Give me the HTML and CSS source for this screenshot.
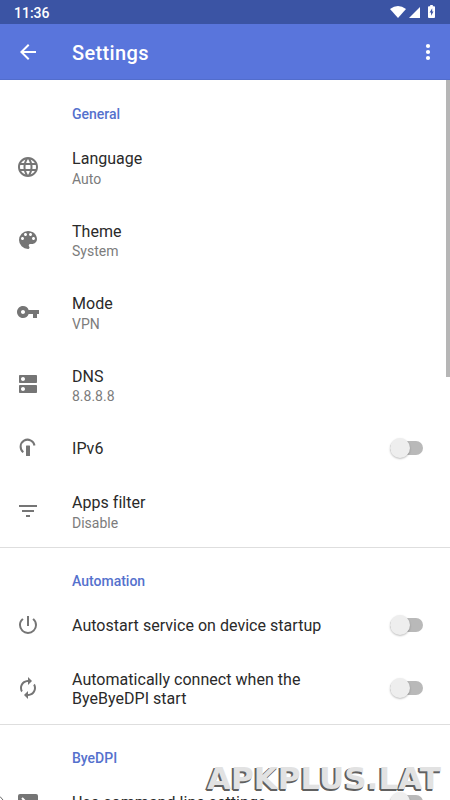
FILE: index.html
```html
<!DOCTYPE html>
<html lang="en">
<head>
<meta charset="utf-8">
<title>Settings</title>
<link rel="stylesheet" href="styles.css">
</head>
<body>
<div class="screen">
  <div class="status">
    <span>11:36</span>
    <div class="status-icons">
      <svg width="16" height="12" viewBox="0 0 16 12"><path d="M0 3Q8-3 16 3L8 12Z"/></svg>
      <svg width="11" height="11" viewBox="0 0 12 12"><path d="M12 0V12H0Z"/></svg>
      <svg class="battery" width="7" height="13" viewBox="0 0 8 14" preserveAspectRatio="none"><path d="M2.500 0h3v1.300H7a1 1 0 0 1 1 1V13a1 1 0 0 1-1 1H1a1 1 0 0 1-1-1V2.300a1 1 0 0 1 1-1h1.500z"/><path class="bolt" d="M4.800 3.500 1.800 8H3.500v3.500L6.300 7H4.800z"/></svg>
    </div>
  </div>
  <header class="bar">
    <svg class="back" width="24" height="24" viewBox="0 0 24 24"><path d="M20 11H7.830l5.590-5.590L12 4l-8 8 8 8 1.410-1.410L7.830 13H20v-2z"/></svg>
    <h1>Settings</h1>
    <svg width="24" height="24" viewBox="0 0 24 24"><circle cx="12" cy="6" r="2.100"/><circle cx="12" cy="12" r="2.100"/><circle cx="12" cy="18" r="2.100"/></svg>
  </header>
  <main>
    <section>
      <h2>General</h2>
      <div class="row tall">
        <svg viewBox="0 0 24 24"><path d="M11.990 2C6.470 2 2 6.480 2 12s4.470 10 9.990 10C17.520 22 22 17.520 22 12S17.520 2 11.990 2zm6.930 6h-2.950a15.650 15.650 0 0 0-1.380-3.560A8.030 8.030 0 0 1 18.920 8zM12 4.040c.830 1.200 1.480 2.530 1.910 3.960h-3.820c.430-1.430 1.080-2.760 1.910-3.960zM4.260 14C4.100 13.360 4 12.690 4 12s.100-1.360.260-2h3.380c-.080.660-.140 1.320-.140 2s.060 1.340.140 2H4.260zm.820 2h2.950c.320 1.250.780 2.450 1.380 3.560A7.990 7.990 0 0 1 5.080 16zm2.950-8H5.080a7.990 7.990 0 0 1 4.330-3.560A15.650 15.650 0 0 0 8.030 8zM12 19.960c-.830-1.200-1.480-2.530-1.910-3.960h3.820c-.430 1.430-1.080 2.760-1.910 3.960zM14.340 14H9.660c-.090-.660-.160-1.320-.160-2s.070-1.350.160-2h4.680c.090.650.160 1.320.160 2s-.070 1.340-.160 2zm.250 5.560c.600-1.110 1.060-2.310 1.380-3.560h2.950a8.030 8.030 0 0 1-4.330 3.560zM16.360 14c.080-.660.140-1.320.140-2s-.060-1.340-.140-2h3.380c.160.640.260 1.310.260 2s-.100 1.360-.260 2h-3.380z"/></svg>
        <div class="text"><p>Language</p><small>Auto</small></div>
      </div>
      <div class="row tall">
        <svg viewBox="0 0 24 24"><path d="M12 3a9 9 0 0 0 0 18c.830 0 1.500-.670 1.500-1.500 0-.390-.150-.740-.390-1.010-.230-.260-.380-.610-.380-.990 0-.830.670-1.500 1.500-1.500H16c2.760 0 5-2.240 5-5 0-4.420-4.030-8-9-8zm-5.500 9C5.670 12 5 11.330 5 10.500S5.670 9 6.500 9 8 9.670 8 10.500 7.330 12 6.500 12zm3-4C8.670 8 8 7.330 8 6.500S8.670 5 9.500 5s1.500.670 1.500 1.500S10.330 8 9.500 8zm5 0c-.830 0-1.500-.670-1.500-1.500S13.670 5 14.500 5s1.500.670 1.500 1.500S15.330 8 14.500 8zm3 4c-.830 0-1.500-.670-1.500-1.500S16.670 9 17.500 9s1.500.670 1.500 1.500-.670 1.500-1.500 1.500z"/></svg>
        <div class="text"><p>Theme</p><small>System</small></div>
      </div>
      <div class="row tall">
        <svg viewBox="0 0 24 24"><path d="M12.650 10A5.990 5.990 0 0 0 7 6c-3.310 0-6 2.690-6 6s2.690 6 6 6a5.990 5.990 0 0 0 5.650-4H17v4h4v-4h2v-4H12.650zM7 14c-1.100 0-2-.900-2-2s.900-2 2-2 2 .900 2 2-.900 2-2 2z"/></svg>
        <div class="text"><p>Mode</p><small>VPN</small></div>
      </div>
      <div class="row tall">
        <svg viewBox="0 0 24 24"><path d="M20 13H4c-.550 0-1 .450-1 1v6c0 .550.450 1 1 1h16c.550 0 1-.450 1-1v-6c0-.550-.450-1-1-1zM7 19c-1.100 0-2-.900-2-2s.900-2 2-2 2 .900 2 2-.900 2-2 2zM20 3H4c-.550 0-1 .450-1 1v6c0 .550.450 1 1 1h16c.550 0 1-.450 1-1V4c0-.550-.450-1-1-1zM7 9c-1.100 0-2-.900-2-2s.900-2 2-2 2 .900 2 2-.900 2-2 2z"/></svg>
        <div class="text"><p>DNS</p><small>8.8.8.8</small></div>
      </div>
      <div class="row">
        <svg viewBox="0 0 24 24"><path class="line" d="M7.300 16.200A7 7 0 1 1 18.500 9.500"/><rect x="10" y="9.500" width="4" height="10.500" rx=".5"/></svg>
        <div class="text"><p>IPv6</p></div>
        <span class="switch"></span>
      </div>
      <div class="row tall">
        <svg viewBox="0 0 24 24"><path d="M10 18h4v-2h-4v2zM3 6v2h18V6H3zm3 7h12v-2H6v2z"/></svg>
        <div class="text"><p>Apps filter</p><small>Disable</small></div>
      </div>
    </section>
    <section>
      <h2>Automation</h2>
      <div class="row">
        <svg viewBox="0 0 24 24"><path d="M13 3h-2v10h2V3zm4.830 2.170-1.420 1.420A6.920 6.920 0 0 1 19 12c0 3.870-3.130 7-7 7A6.995 6.995 0 0 1 7.580 6.580L6.170 5.170A8.932 8.932 0 0 0 3 12a9 9 0 0 0 18 0c0-2.740-1.230-5.180-3.170-6.830z"/></svg>
        <div class="text"><p>Autostart service on device startup</p></div>
        <span class="switch"></span>
      </div>
      <div class="row tall">
        <svg viewBox="0 0 24 24"><path d="M12 6v3l4-4-4-4v3c-4.420 0-8 3.580-8 8 0 1.570.460 3.030 1.240 4.260L6.700 14.800A5.870 5.870 0 0 1 6 12c0-3.310 2.690-6 6-6zm6.760 1.740L17.300 9.200c.440.840.700 1.790.700 2.800 0 3.310-2.690 6-6 6v-3l-4 4 4 4v-3c4.420 0 8-3.580 8-8 0-1.570-.460-3.030-1.240-4.260z"/></svg>
        <div class="text wrap"><p>Automatically connect when the ByeByeDPI start</p></div>
        <span class="switch"></span>
      </div>
    </section>
    <section>
      <h2>ByeDPI</h2>
      <div class="row">
        <svg viewBox="0 0 24 24"><path d="M4 4h16a2 2 0 0 1 2 2v12a2 2 0 0 1-2 2H4a2 2 0 0 1-2-2V6a2 2 0 0 1 2-2z"/><path class="prompt" d="M6 8l4 4-4 4M12 16h6"/></svg>
        <div class="text last"><p>Use command line settings</p></div>
        <span class="switch"></span>
      </div>
    </section>
  </main>
  <div class="scrollbar"></div>
  <svg class="corner" width="4" height="4" viewBox="0 0 4 4"><path d="M0 .5 3 4"/></svg>
  <div class="watermark">APKPLUS.LAT</div>
</div>
</body>
</html>
```
FILE: styles.css
```css
* { box-sizing: border-box; }
body, h1, h2, p { margin: 0; }
body { font-family: Roboto, "Liberation Sans", sans-serif; background: #fff; overflow: hidden; }
svg { display: block; flex: none; }
.screen { position: relative; width: 450px; height: 800px; overflow: hidden; }
.status {
  height: 24px; padding: 1px 15px 0 14px; display: flex; align-items: center;
  justify-content: space-between; background: #3b54a4; color: #fff;
  font-size: 14px; font-weight: 500;
}
.status-icons { display: flex; align-items: flex-end; gap: 3px; margin-top: -2px; fill: #fff; }
.status-icons .battery { margin-left: 5px; }
.bolt { fill: #3b54a4; }
.bar {
  height: 56px; padding: 0 10px 0 16px; display: flex; align-items: center;
  background: #5975dc; color: #fff; fill: #fff; border-bottom: 1px solid #526dcc;
}
.bar h1 { flex: 1; margin-left: 32px; padding-top: 3px; font-size: 20px; font-weight: 500; letter-spacing: .35px; }
section + section { border-top: 1px solid #dedede; }
h2 {
  height: 51px; padding: 17px 0 0 72px; color: #5571cd;
  font-size: 14px; line-height: 34px; font-weight: 500;
}
section + section h2 { height: 50px; padding-top: 16px; }
.row { height: 54px; padding: 0 27px 0 16px; display: flex; align-items: center; }
.row.tall { height: 72.4px; }
.row svg { width: 24px; height: 24px; margin-right: 32px; fill: #757575; }
.row .line { fill: none; stroke: #757575; stroke-width: 2; }
.row .prompt { fill: none; stroke: #fff; stroke-width: 2; }
.text { flex: 1; padding-top: 2px; color: #2a2a2a; }
.tall .text { padding-top: 3px; }
.tall .wrap { padding-top: 2px; }
.text.last { padding-top: 0; }
.text p { max-width: 270px; font-size: 16px; line-height: 19px; letter-spacing: .03px; }
.text small { display: block; margin-top: 1.5px; font-size: 14px; line-height: 18px; color: #7c7c7c; }
.switch { position: relative; width: 33px; height: 14px; border-radius: 7px; background: #b9b9b9; }
.switch::before {
  content: ""; position: absolute; left: 0; top: -3px; width: 20px; height: 20px;
  border-radius: 50%; background: #eee; box-shadow: 0 1px 2px rgba(0, 0, 0, .25);
}
.scrollbar { position: absolute; right: 0; top: 80px; width: 4px; height: 297px; background: #b6b6b6; }
.corner { position: absolute; left: 0; bottom: 0; fill: none; stroke: #666; }
.watermark {
  position: absolute; left: 207px; top: 760px; white-space: nowrap;
  font: bold 31px/36px "DejaVu Sans", sans-serif; color: #e2e2e2;
  text-shadow: -1px 1px 0 #606060, -2px 1px 0 #606060, -1px 2px 0 #606060;
}
```
